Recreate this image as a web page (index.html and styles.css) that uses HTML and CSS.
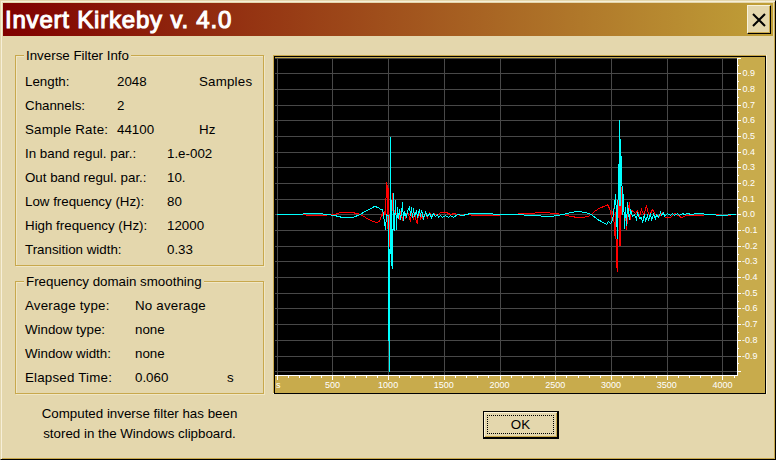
FILE: index.html
```html
<!DOCTYPE html>
<html lang="en">
<head>
<meta charset="utf-8">
<title>Invert Kirkeby v. 4.0</title>
<link rel="stylesheet" href="styles.css">
</head>
<body>
<main class="window">
  <header class="titlebar">
    <h1>Invert Kirkeby v. 4.0</h1>
    <button class="close" aria-label="Close"><svg width="14" height="14" viewBox="0 0 14 14"><path d="M1 1L13 13M13 1L1 13"/></svg></button>
  </header>
  <div class="content">
    <div class="left">
      <section class="group info">
        <h2>Inverse Filter Info</h2>
        <div class="row short"><span>Length:</span><span>2048</span><span class="wide">Samples</span></div>
        <div class="row short"><span>Channels:</span><span>2</span></div>
        <div class="row short"><span class="wide">Sample Rate:</span><span>44100</span><span>Hz</span></div>
        <div class="row long"><span>In band regul. par.:</span><span>1.e-002</span></div>
        <div class="row long"><span>Out band regul. par.:</span><span>10.</span></div>
        <div class="row long"><span>Low frequency (Hz):</span><span>80</span></div>
        <div class="row long"><span>High frequency (Hz):</span><span>12000</span></div>
        <div class="row long"><span>Transition width:</span><span>0.33</span></div>
      </section>
      <section class="group smoothing">
        <h2>Frequency domain smoothing</h2>
        <div class="row mid"><span class="wide">Average type:</span><span class="wide">No average</span></div>
        <div class="row mid"><span>Window type:</span><span>none</span></div>
        <div class="row mid"><span>Window width:</span><span>none</span></div>
        <div class="row mid"><span class="wide">Elapsed Time:</span><span>0.060</span><span>s</span></div>
      </section>
      <p class="note">Computed inverse filter has been<br>stored in the Windows clipboard.</p>
    </div>
    <div class="right">
      <div class="chart"><svg id="plot" width="494" height="339" viewBox="273 55 494 339" shape-rendering="crispEdges"></svg></div>
      <button class="ok"><span>OK</span></button>
    </div>
  </div>
</main>
<script src="plot.js"></script>
</body>
</html>
```
FILE: styles.css
```css
* { box-sizing: border-box; }
body { margin: 0; background: #e4d7ad; font: 13.33px/24px "Liberation Sans", Arial, sans-serif; color: #000; }
.window { width: 776px; height: 460px; padding: 2px 1px 0 2px; border: 1px solid; border-color: #e4d7ad #000 #000 #e4d7ad; box-shadow: inset 1px 1px #f6efd8, inset -1px -1px #c8a84c; overflow: hidden; }
.titlebar { display: flex; align-items: center; justify-content: space-between; width: 770px; height: 33px; padding: 0 2px; background: linear-gradient(90deg, #800000, #c0a038); }
h1 { margin: 0; font-size: 24px; font-weight: 400; line-height: 33px; color: #fff; letter-spacing: .8px; white-space: nowrap; -webkit-text-stroke: 1.1px #fff; }
button { font: inherit; color: #000; padding: 0; border-radius: 0; background: #e4d7ad; }
.close { width: 24px; height: 29px; border: 1px solid; border-color: #f8f2dc #000 #000 #f8f2dc; box-shadow: inset -1px -1px #c8a84c; display: flex; align-items: center; justify-content: center; }
.close path { fill: none; stroke: #000; stroke-width: 2; }
.content { display: flex; padding: 19px 0 0 12px; gap: 9px; }
.left { width: 249px; }
.group { position: relative; border: 1px solid #c8a84c; box-shadow: 1px 1px #f0e6c4, inset 1px 1px #f0e6c4; padding: 14px 0 0 9px; }
.info { height: 211px; }
.smoothing { height: 113px; margin-top: 15px; padding-top: 12px; }
h2 { position: absolute; left: 8px; top: -10px; height: 20px; margin: 0; padding: 0 2px; background: #e4d7ad; font: inherit; line-height: 20px; white-space: nowrap; }
.row { display: grid; height: 24px; white-space: nowrap; }
.short { grid-template-columns: 92px 82px 1fr; }
.long { grid-template-columns: 142px 1fr; }
.mid { grid-template-columns: 110px 92px 1fr; }
.wide { letter-spacing: .2px; }
.note { margin: 10px 0 0; text-align: center; line-height: 20px; white-space: nowrap; }
.right { width: 494px; }
.chart { height: 339px; }
.chart svg { display: block; }
.chart text { font: 9px "Liberation Sans", Arial, sans-serif; fill: #fff; }
.ok { display: block; width: 76px; height: 28px; margin: 17px 0 0 210px; padding: 3px; border: 1px solid #000; border-right-width: 2px; border-bottom-width: 2px; box-shadow: inset 1px 1px #f8f0d4, inset -1px -1px #c8a84c; }
.ok span { display: block; height: 19px; line-height: 18px; border: 1px dotted #000; }
```
FILE: plot.js
```js
const out = [];
const rect = (x, y, w, h, c) => out.push(`<rect x="${x}" y="${y}" width="${w}" height="${h}" fill="${c}"/>`);
rect(273, 55, 494, 339, '#f8f0d4');
rect(273, 55, 493, 338, '#c8a84c');
rect(274, 56, 492, 338, '#000');
rect(275, 57, 490, 336, '#c8ab4c');
rect(275, 58, 462, 317, '#000');
// Grid
for (let i = 0; i <= 20; i++) rect(275, Math.round(57.6 + i * 15.68), 462, 1, '#484848');
for (let i = 0; i <= 8; i++) rect(Math.round(276.7 + i * 55.72), 58, 1, 317, '#484848');
// Rulers
rect(275, 375, 463, 1, '#fff');
rect(737, 58, 1, 318, '#fff');
for (let i = 0; i <= 41; i++) rect(Math.round(276.7 + i * 11.144), 376, 1, i % 5 ? 2 : 4, '#fff');
for (let i = 0; i <= 40; i++) rect(738, Math.round(57.6 + i * 7.84), i % 2 ? 1 : 3, 1, '#fff');
const label = (x, y, a, t) => out.push(`<text x="${x}" y="${y}" text-anchor="${a}">${t}</text>`);
label(276, 388, 'start', 's');
for (let i = 1; i <= 8; i++) label(276.7 + i * 55.72, 388, 'middle', i * 500);
for (let i = 1; i < 20; i++) {
  const v = (10 - i) / 10;
  label(v < 0 ? 742 : 742.5, Math.round(57.6 + i * 15.68) + 3, 'start', v.toFixed(1));
}
// Decaying oscillation around each impulse: x,y pairs
const red = `276,214 300,214 310,215 320,215 334,214 340,212 352,212 360,214 365,217 370,220 376,222 379,221 381,215 382,213 383,217 384,212 385,214 386,182 387,187 387,228 388,188 389,240 390,253 391,230 392,193 393,193 394,225 395,205 396,219 397,210 399,219 400,211 402,219 404,212 405,218 407,211 409,217 410,221 411,212 413,219 414,212 416,222 417,223 418,213 419,211 420,219 422,212 422,218 425,213 427,217 429,212 431,215 434,213 437,215 440,212 446,212 450,214 454,213 460,215 466,214 475,215 490,215 510,214 525,213 545,212 553,213 563,214 570,216 578,217 583,217 590,215 594,211 600,207 604,206 607,204 609,208 610,211 611,217 613,208 614,235 615,212 616,264 617,271 618,165 619,245 620,165 620,245 621,187 622,214 623,197 624,225 625,211 626,229 628,208 629,202 630,219 631,210 633,211 635,213 637,210 639,216 641,209 643,214 644,213 646,205 647,210 649,215 652,209 655,214 659,216 662,212 665,217 670,217 674,213 681,217 686,215 696,215 711,214 725,215 736,214`;
const cyan = `276,214 298,214 308,213 319,213 334,215 342,217 352,217 360,214 364,211 369,209 374,206 378,207 380,209 382,209 383,214 384,222 385,229 386,214 387,215 388,215 388,310 389,371 390,137 390,253 391,200 391,262 392,268 393,193 394,230 395,200 396,229 397,207 398,218 399,209 400,219 401,213 402,202 403,220 404,211 406,217 407,211 409,206 410,215 411,207 412,217 413,208 414,216 416,210 417,217 419,209 420,216 421,210 423,218 425,212 427,216 429,213 431,217 433,213 435,216 437,214 438,217 440,215 442,217 445,215 448,217 450,215 453,217 457,214 462,215 470,213 485,213 500,214 516,214 530,215 550,216 563,214 570,212 578,211 585,212 591,214 597,219 601,221 606,224 608,221 610,223 612,220 614,205 615,194 616,214 617,238 618,164 619,205 619,120 620,156 620,205 621,156 622,214 622,193 623,194 624,228 625,207 626,225 627,202 628,213 629,219 630,209 632,216 634,214 636,219 637,212 639,218 641,217 642,222 644,214 645,221 647,215 648,220 650,213 651,220 653,214 655,218 656,214 658,217 660,212 661,215 663,212 664,216 667,213 670,215 672,213 674,215 677,213 679,215 682,213 684,214 687,213 691,214 696,213 710,214 720,215 736,214`;
for (const [p, c] of [[red, '#f00'], [cyan, '#0ff']])
  out.push(`<polyline points="${p}" transform="translate(.5 .5)" fill="none" stroke="${c}" stroke-width="1"/>`);
document.getElementById('plot').innerHTML = out.join('');
```
